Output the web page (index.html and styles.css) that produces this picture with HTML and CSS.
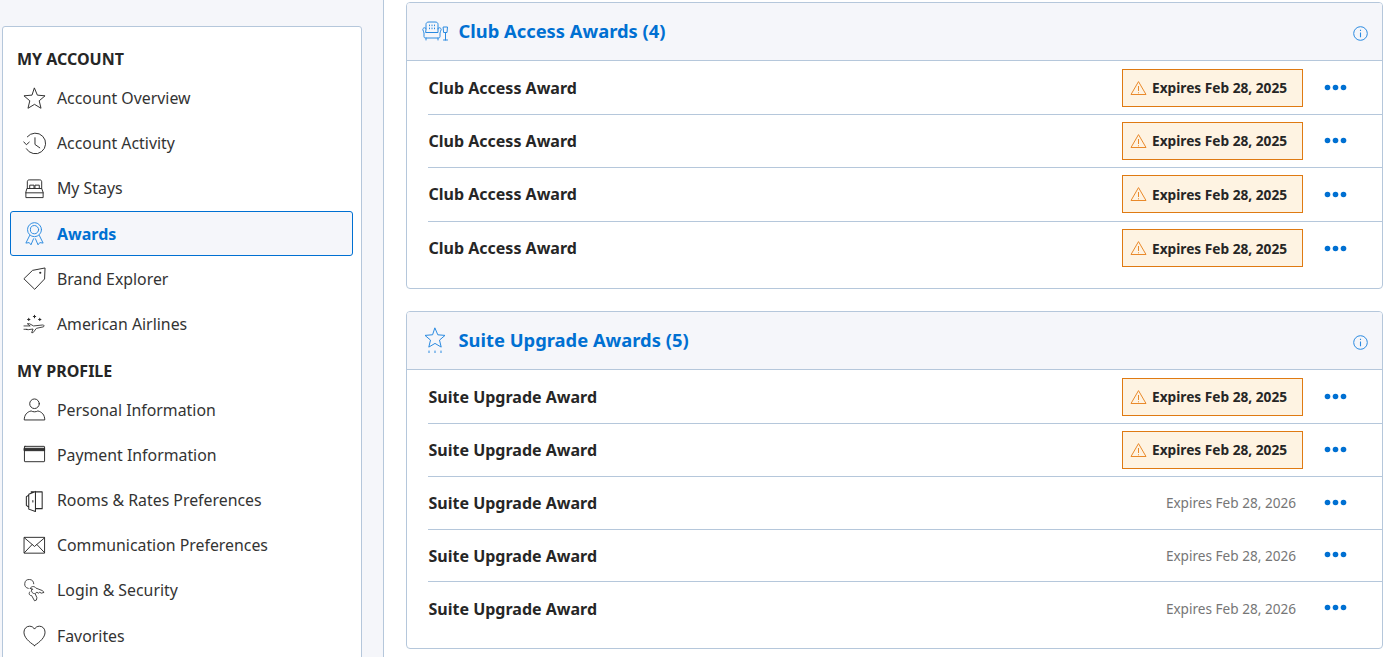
FILE: index.html
```html
<!DOCTYPE html>
<html lang="en">
<head>
<meta charset="utf-8">
<title>Awards</title>
<link rel="stylesheet" href="styles.css">
</head>
<body>
<svg class="defs" width="0" height="0" aria-hidden="true">
  <defs>
    <g id="warn"><path d="M8.5 1.600 1 14.500h15z" fill="none" stroke="currentColor" stroke-width="1" stroke-linejoin="round"/><path d="M8.500 6v5M8.500 12.300v1" fill="none" stroke="currentColor" stroke-width="1"/></g>
    <g id="info"><circle cx="7.5" cy="7.5" r="6.8" fill="none" stroke="currentColor" stroke-width="1"/><path d="M7.5 6.500v4.800M7.500 3.800v1.300" fill="none" stroke="currentColor" stroke-width="1.100"/></g>
    <g id="more"><circle cx="3.5" cy="3.5" r="2.8" fill="currentColor"/><circle cx="11.5" cy="3.5" r="2.8" fill="currentColor"/><circle cx="19.5" cy="3.5" r="2.8" fill="currentColor"/></g>
  </defs>
</svg>
<div class="page">
  <aside class="side">
    <nav class="card">
      <h2 class="nav-head">MY ACCOUNT</h2>
      <a class="item"><svg class="ico" viewBox="0 0 24 24"><path d="m12 1.300 3 7.200 8 .7-6.100 5.200 1.900 7.800-6.800-4.100-6.800 4.100 1.900-7.800L1 9.200l8-.7z"/></svg><span>Account Overview</span></a>
      <a class="item"><svg class="ico" viewBox="0 0 24 24"><path d="M4.500 5A10.800 10.800 0 1 1 3.500 17.500M12.500 6v7l5 3.500M.8 10.300l2.700 3 3-2.700"/></svg><span>Account Activity</span></a>
      <a class="item"><svg class="ico" viewBox="0 0 24 24"><path d="M4.500 12V5C4.500 3.500 5.500 3 6.500 3h11c1 0 2 .5 2 2v7M7 12V8.500h4.500V12M12.500 12V8.500H17V12M4.500 12h15L21 16v5.500H3V16zM3 16.500h18"/></svg><span>My Stays</span></a>
      <a class="item active"><svg class="ico" viewBox="0 0 24 24"><circle cx="12" cy="8" r="7.300"/><circle cx="12" cy="8" r="4.300"/><path d="M7 14 3 22l3.500-.5 1.800 2.300L11 17.500M17 14l4 8-3.500-.5-1.800 2.300L13 17.500"/></svg><span>Awards</span></a>
      <a class="item"><svg class="ico" viewBox="0 0 24 24"><path d="M1.200 12 10 3.500 23 1l-.5 11.500L12.500 23z"/><circle cx="18" cy="6" r="1.100" class="solid"/></svg><span>Brand Explorer</span></a>
      <a class="item"><svg class="ico" viewBox="0 0 24 24"><path d="M1 13.500h6.500l-3-2.300h2.300l4.200 2.300 9.500-1c2 0 2 1.500.5 2l-7 1.500-3.500 4.500H9l1.500-3.800-5 .7-2-.2M1 17h3" stroke-width=".9"/><path d="M6 5.500v2.400M4.800 6.700h2.400M12 2.500v2.400M10.800 3.700h2.400M17.500 5.500v2.400M16.300 6.700h2.400" stroke-width="1.100"/></svg><span>American Airlines</span></a>
      <h2 class="nav-head second">MY PROFILE</h2>
      <a class="item"><svg class="ico" viewBox="0 0 24 24"><circle cx="12" cy="6" r="5"/><path d="M1.300 22.500c0-5 3-8 7.200-9 2 1.200 5 1.200 7 0 4.200 1 7.200 4 7.200 9z"/></svg><span>Personal Information</span></a>
      <a class="item"><svg class="ico" viewBox="0 0 24 24"><rect x="1.500" y="3.500" width="21" height="16" rx=".5"/><path d="M1.500 5.500h21V8h-21z" fill="currentColor"/></svg><span>Payment Information</span></a>
      <a class="item"><svg class="ico" viewBox="0 0 24 24"><path d="M8.500 3h11.500v17.500h-7M6 5.500 13 2.500v21l-7-2.500zM6 6.500 3.500 8v9l2.500 2M10.300 12v1.500" stroke-width="1.100"/></svg><span>Rooms &amp; Rates Preferences</span></a>
      <a class="item"><svg class="ico" viewBox="0 0 24 24"><rect x="1.500" y="3.500" width="21" height="16.500"/><path d="M1.500 4 12 13 22.500 4M1.500 19.500l8-8.500M22.500 19.500l-8-8.500"/></svg><span>Communication Preferences</span></a>
      <a class="item"><svg class="ico thin" viewBox="0 0 24 24"><path d="M5.500 9.800A4.700 4.700 0 1 1 11.200 5M7.500 9.500c2-2.500 4.500-2 6 0l6.500 2.500 2 2-3 .8-1.500-1-1.500 1-1.500-1-1.500 1.200c-2.500 1-5-1.500-4-4.500zM7 13.500c-1.500 2 0 4 2 3.800l3 5.400 2-.7.500-2.500-1.500-3.500M10 10.500v.5" stroke-width=".9"/></svg><span>Login &amp; Security</span></a>
      <a class="item"><svg class="ico" viewBox="0 0 24 24"><path d="M12 22.500C6 18.500 1 14 1 8.500 1 5 3.500 2.300 6.800 2.300c2.300 0 4.200 1.200 5.200 3 1-1.800 2.900-3 5.200-3C20.500 2.300 23 5 23 8.500c0 5.500-5 10-11 14z"/></svg><span>Favorites</span></a>
    </nav>
  </aside>
  <main class="main">
    <section class="panel club">
      <header class="panel-head">
        <svg class="head-ico" viewBox="0 0 26 20"><path d="M4 8V3.500C4 1.800 5 1 7 1h6c2 0 3 .8 3 2.500V8M4 8C4 6 .8 6.500.8 8.500c0 1.500 1.200 2 1.200 3.500v3.500c0 1 .7 1.500 1.500 1.500h13c.8 0 1.500-.5 1.500-1.500V12c0-1.500 1.200-2 1.200-3.500C19.200 6.500 16 6 16 8v3.500H4zM4 17v2M16 17v2M21.500 6h4L25 11.500h-3zM23.500 11.500v7.500M21.500 19h4M7.500 4v.8M10 4v.8M12.500 4v.8M7.500 7v.8M10 7v.8M12.500 7v.8"/></svg>
        <h3 class="panel-title">Club Access Awards (4)</h3>
        <svg class="info" viewBox="0 0 15 15"><use href="#info"/></svg>
      </header>
      <ul class="rows">
        <li class="row"><span class="name">Club Access Award</span><span class="badge"><svg class="warn" viewBox="0 0 17 16"><use href="#warn"/></svg>Expires Feb 28, 2025</span><svg class="more" viewBox="0 0 23 7"><use href="#more"/></svg></li>
        <li class="row"><span class="name">Club Access Award</span><span class="badge"><svg class="warn" viewBox="0 0 17 16"><use href="#warn"/></svg>Expires Feb 28, 2025</span><svg class="more" viewBox="0 0 23 7"><use href="#more"/></svg></li>
        <li class="row"><span class="name">Club Access Award</span><span class="badge"><svg class="warn" viewBox="0 0 17 16"><use href="#warn"/></svg>Expires Feb 28, 2025</span><svg class="more" viewBox="0 0 23 7"><use href="#more"/></svg></li>
        <li class="row"><span class="name">Club Access Award</span><span class="badge"><svg class="warn" viewBox="0 0 17 16"><use href="#warn"/></svg>Expires Feb 28, 2025</span><svg class="more" viewBox="0 0 23 7"><use href="#more"/></svg></li>
      </ul>
    </section>
    <section class="panel suite">
      <header class="panel-head">
        <svg class="head-ico star" viewBox="0 0 22 26"><path d="m11 1.200 2.800 6.600 7.200.6-5.500 4.700 1.700 7-6.200-3.700-6.200 3.700 1.700-7L1 8.400l7.200-.6z"/><path d="M5 24v2M11 24v2M17 24v2"/></svg>
        <h3 class="panel-title">Suite Upgrade Awards (5)</h3>
        <svg class="info" viewBox="0 0 15 15"><use href="#info"/></svg>
      </header>
      <ul class="rows">
        <li class="row"><span class="name">Suite Upgrade Award</span><span class="badge"><svg class="warn" viewBox="0 0 17 16"><use href="#warn"/></svg>Expires Feb 28, 2025</span><svg class="more" viewBox="0 0 23 7"><use href="#more"/></svg></li>
        <li class="row"><span class="name">Suite Upgrade Award</span><span class="badge"><svg class="warn" viewBox="0 0 17 16"><use href="#warn"/></svg>Expires Feb 28, 2025</span><svg class="more" viewBox="0 0 23 7"><use href="#more"/></svg></li>
        <li class="row plain"><span class="name">Suite Upgrade Award</span><span class="date">Expires Feb 28, 2026</span><svg class="more" viewBox="0 0 23 7"><use href="#more"/></svg></li>
        <li class="row plain"><span class="name">Suite Upgrade Award</span><span class="date">Expires Feb 28, 2026</span><svg class="more" viewBox="0 0 23 7"><use href="#more"/></svg></li>
        <li class="row plain"><span class="name">Suite Upgrade Award</span><span class="date">Expires Feb 28, 2026</span><svg class="more" viewBox="0 0 23 7"><use href="#more"/></svg></li>
      </ul>
    </section>
  </main>
</div>
</body>
</html>
```
FILE: styles.css
```css
* { box-sizing: border-box; }
html, body { margin: 0; height: 100%; overflow: hidden; }
body { font-family: "Noto Sans", sans-serif; color: #262626; background: #fff; font-size: 16px; }
.defs { position: absolute; }
.page { display: grid; grid-template-columns: 384px 1fr; height: 657px; overflow: hidden; }
.side { background: #f5f6fa; border-right: 1px solid #b5c7db; padding: 26px 21px 0 2px; }
.card { background: #fff; border: 1px solid #b5c7db; border-radius: 3px 3px 0 0; padding: 19px 8px 0 7px; height: 700px; }
.nav-head { margin: 0 0 3.5px 7px; font-size: 16px; line-height: 26px; font-weight: 700; height: 26px; }
.nav-head.second { margin-top: 11px; }
.item { display: flex; align-items: center; height: 45.2px; padding-left: 12px; gap: 11px; line-height: 22px; font-size: 15.85px; color: #333; border: 1px solid transparent; border-radius: 3px; }
.item.active { background: #f5f6fa; border-color: #0070d2; color: #0070d2; font-weight: 700; font-size: 16px; }
.ico { width: 23px; height: 23px; flex: none; fill: none; stroke: #2b2b2b; stroke-width: 1; stroke-linejoin: round; stroke-linecap: round; }
.ico .solid { fill: #2b2b2b; stroke: none; }
.active .ico { stroke: #2a8ae0; }
.main { padding: 2px 0 0 22px; min-width: 0; }
.panel { width: 977px; border: 1px solid #b5c7db; border-radius: 4px; background: #fff; overflow: hidden; }
.club { height: 287px; margin-bottom: 22px; }
.suite { height: 338px; }
.panel-head { display: flex; align-items: center; height: 58.4px; background: #f5f6fa; border-bottom: 1px solid #b5c7db; padding: 0 14px 2px 15px; }
.head-ico { width: 26px; height: 20px; flex: none; fill: none; stroke: #2a8ae0; stroke-width: 1; stroke-linejoin: round; stroke-linecap: round; margin-right: 10.5px; }
.head-ico.star { width: 22px; height: 26px; margin: 0 12.5px 0 2px; }
.panel-title { margin: 0; font-size: 18.35px; line-height: 24px; font-weight: 700; color: #0070d2; flex: 1; }
.info { width: 15px; height: 15px; color: #2a8ae0; flex: none; margin-top: 6px; }
.rows { list-style: none; margin: 0 0 0 21px; padding: 0; }
.row { display: flex; align-items: center; height: 53.4px; border-bottom: 1px solid #b5c7db; }
.row.plain { height: 52.5px; }
.row:last-child { border-bottom: 0; }
.name { flex: 1; font-weight: 700; font-size: 16px; color: #262626; padding-left: .5px; }
.plain .name { padding-top: .8px; }
.badge { display: flex; align-items: center; width: 181px; height: 38px; border: 1px solid #df7a12; background: #fef3e2; font-size: 13.7px; font-weight: 700; padding-left: 7px; gap: 5px; color: #262626; white-space: nowrap; }
.warn { width: 17px; height: 16px; color: #e9892a; flex: none; }
.date { font-size: 13.6px; color: #767676; margin-right: 7px; padding-bottom: .8px; }
.more { width: 23px; height: 7px; color: #0070d2; margin: 0 35px 0 21px; flex: none; }
.plain .more { margin-bottom: 1px; }
```
